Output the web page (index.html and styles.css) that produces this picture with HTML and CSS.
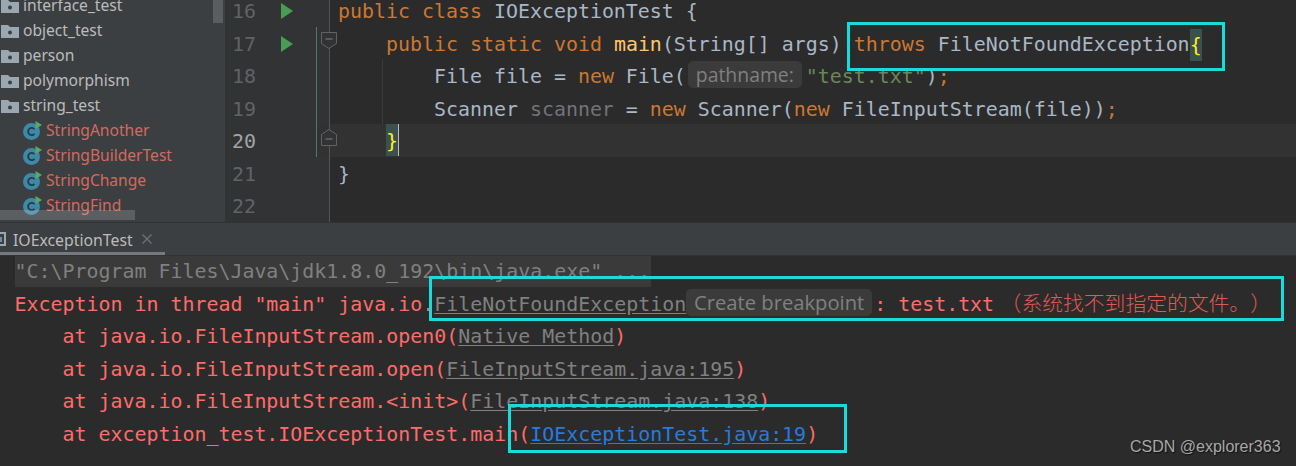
FILE: index.html
```html
<!DOCTYPE html>
<html lang="en">
<head>
<meta charset="utf-8">
<title>IOExceptionTest</title>
<link rel="stylesheet" href="styles.css">
</head>
<body>
<svg class="defs" width="0" height="0" aria-hidden="true">
  <symbol id="folder" viewBox="0 0 18 14"><path d="M0 1h7l2 2h9v11H0z" fill="#9aa7b0"/><circle cx="9" cy="8.5" r="2" fill="#3c3f41"/></symbol>
  <symbol id="cls" viewBox="0 0 19 19"><circle cx="8.5" cy="10.5" r="8.5" fill="#3d89a8"/><path d="M11.5 8.2a3.6 3.6 0 1 0 0 4.6" fill="none" stroke="#2b3a42" stroke-width="1.8"/><path d="M12.5 0l6.5 4-6.5 4z" fill="#59a869"/></symbol>
  <symbol id="run" viewBox="0 0 12 16"><path d="M0 0l12 8-12 8z" fill="#499c54"/></symbol>
</svg>
<main class="page">
  <section class="top">
    <nav class="tree">
      <div class="row"><svg class="ico-folder"><use href="#folder"/></svg>interface_test</div>
      <div class="row"><svg class="ico-folder"><use href="#folder"/></svg>object_test</div>
      <div class="row"><svg class="ico-folder"><use href="#folder"/></svg>person</div>
      <div class="row"><svg class="ico-folder"><use href="#folder"/></svg>polymorphism</div>
      <div class="row"><svg class="ico-folder"><use href="#folder"/></svg>string_test</div>
      <div class="row cls"><svg class="ico-cls"><use href="#cls"/></svg>StringAnother</div>
      <div class="row cls"><svg class="ico-cls"><use href="#cls"/></svg>StringBuilderTest</div>
      <div class="row cls"><svg class="ico-cls"><use href="#cls"/></svg>StringChange</div>
      <div class="row cls"><svg class="ico-cls"><use href="#cls"/></svg>StringFind</div>
      <div class="vscroll"></div>
      <div class="hscroll"></div>
    </nav>
    <div class="gutter">
      <div class="gl"><span class="num">16</span><svg class="run"><use href="#run"/></svg><span class="fold"></span></div>
      <div class="gl"><span class="num">17</span><svg class="run"><use href="#run"/></svg><span class="fold mod"><svg class="mark" viewBox="0 0 16 17"><path d="M.5.5h15v11l-7.500 5-7.500-5z" fill="#313335" stroke="#606366"/><path d="M4.500 7h7" stroke="#808080"/></svg></span></div>
      <div class="gl"><span class="num">18</span><span class="fold mod"></span></div>
      <div class="gl"><span class="num">19</span><span class="fold mod"></span></div>
      <div class="gl"><span class="num cur">20</span><span class="fold mod curbg"><svg class="mark" viewBox="0 0 16 17"><path d="M.5 16.500v-11l7.500-5 7.500 5v11z" fill="#313335" stroke="#606366"/><path d="M4.500 10h7" stroke="#808080"/></svg></span></div>
      <div class="gl"><span class="num">21</span><span class="fold"></span></div>
      <div class="gl"><span class="num">22</span><span class="fold"></span></div>
    </div>
    <div class="editor">
<pre class="ln"><b>public class</b> IOExceptionTest {</pre>
<pre class="ln">    <b>public static void</b> <i>main</i>(String[] args) <b>throws</b> FileNotFoundException<em>{</em></pre>
<pre class="ln guided">        File file = <b>new</b> File(<span class="hint">pathname:</span><u>"test.txt"</u>)<b>;</b></pre>
<pre class="ln guided">        Scanner <s>scanner</s> = <b>new</b> Scanner(<b>new</b> FileInputStream(file))<b>;</b></pre>
<pre class="ln curline">    <em class="caret">}</em></pre>
<pre class="ln">}</pre>
<pre class="ln"> </pre>
    </div>
  </section>
  <header class="tabs">
    <svg class="tabico" viewBox="0 0 6 14"><path d="M-6 1H5v12H-6" fill="none" stroke="#9aa7b0" stroke-width="2"/><path d="M-2 5H2v5H-2z" fill="#6f8fa0"/></svg>
    <span class="tabname">IOExceptionTest</span>
    <svg class="tabx" viewBox="0 0 10 10"><path d="M.5.5l9 9M9.500.5l-9 9" stroke="#6e7173" stroke-width="1.300"/></svg>
  </header>
  <section class="console">
<pre class="cl"><span class="cmd">"C:\Program Files\Java\jdk1.8.0_192\bin\java.exe" ...</span></pre>
<pre class="cl">Exception in thread "main" java.io.<a>FileNotFoundException</a><span class="hint bp">Create breakpoint</span>: test.txt <span class="zh">（系统找不到指定的文件。）</span></pre>
<pre class="cl">    at java.io.FileInputStream.open0(<a>Native Method</a>)</pre>
<pre class="cl">    at java.io.FileInputStream.open(<a>FileInputStream.java:195</a>)</pre>
<pre class="cl">    at java.io.FileInputStream.&lt;init&gt;(<a>FileInputStream.java:138</a>)</pre>
<pre class="cl">    at exception_test.IOExceptionTest.main(<a class="blue">IOExceptionTest.java:19</a>)</pre>
  </section>
  <div class="box box-a"></div>
  <div class="box box-b"></div>
  <div class="box box-c"></div>
  <div class="mark-csdn">CSDN @explorer363</div>
</main>
</body>
</html>
```
FILE: styles.css
```css
* { box-sizing: border-box; }
html, body { margin: 0; height: 466px; overflow: hidden; background: #2b2b2b; }
.defs { position: absolute; }
.page { position: relative; width: 1296px; height: 466px; display: flex; flex-direction: column; overflow: hidden; }

.top { height: 222px; display: flex; overflow: hidden; flex: none; }

.tree { position: relative; width: 225px; flex: none; background: #3c3f41; color: #bbbbbb; font: 15.6px/25px "Noto Sans", sans-serif; overflow: hidden; }
.row { height: 25px; display: flex; align-items: center; gap: 4px; padding-left: 1px; position: relative; top: -7px; white-space: nowrap; }
.row.cls { padding-left: 23px; color: #d5695d; }
.ico-folder { width: 18px; height: 14px; flex: none; }
.ico-cls { width: 19px; height: 19px; flex: none; }
.vscroll { position: absolute; left: 213px; top: 0; width: 10px; height: 23px; background: #5b5d5f; }
.hscroll { position: absolute; left: 0; top: 210px; width: 135px; height: 10px; background: rgba(255,255,255,.17); }

.gutter { width: 105px; flex: none; background: #313335; border-right: 1px solid #555555; margin-top: -6px; font: 19.93px/36.5px "DejaVu Sans Mono", monospace; color: #606366; }
.gl { height: 32.5px; display: flex; align-items: stretch; padding-left: 7px; }
.num { width: 24px; flex: none; }
.num.cur { color: #a4a3a3; }
.run { width: 12px; height: 16px; margin: 9px 0 0 25px; flex: none; }
.fold { width: 13px; margin-left: auto; flex: none; position: relative; }
.fold.mod { border-left: 1px solid #4d7a6c; }
.curbg { background: #323232; }
.mark { position: absolute; left: 4px; top: 5px; width: 16px; height: 17px; z-index: 2; overflow: visible; }

.editor { flex: 1; margin-top: -6px; background: #2b2b2b; min-width: 0; }
.ln, .cl { margin: 0; height: 32.5px; font: 19.93px/36.5px "DejaVu Sans Mono", monospace; white-space: pre; color: #a9b7c6; }
.ln { padding-left: 8px; }
.ln b { font-weight: normal; color: #cc7832; }
.ln i { font-style: normal; color: #ffc66d; }
.ln u { text-decoration: none; color: #6a8759; }
.ln s { text-decoration: none; color: #72737a; }
.ln em { font-style: normal; color: #ffef28; background: #3b514d; display: inline-block; height: 32px; line-height: 34px; vertical-align: top; margin-top: 2px; }
.ln em.caret { box-shadow: 1px 0 0 #bbbbbb; margin-top: 0; line-height: 36.5px; }
.guided { background: linear-gradient(#3b3b3b, #3b3b3b) 52px 0 / 1px 100% no-repeat; }
.curline { background: #323232; }
.hint { display: inline-block; background: #3b3b3b; color: #808080; font: 19.4px/27px "Open Sans", sans-serif; border-radius: 5px; text-align: center; height: 27px; vertical-align: 1px; width: 114px; margin: 0 4px 0 2px; }
.hint.bp { width: 186px; margin: 0 2px 0 0; font-size: 20.2px; }

.tabs { height: 34px; flex: none; background: #3c3f41; border-top: 1px solid #323232; border-bottom: 1px solid #323232; display: flex; align-items: center; color: #bbbbbb; font: 15.8px/32px "Noto Sans", sans-serif; position: relative; }
.tabs::after { content: ""; position: absolute; left: 0; bottom: 0; width: 165px; height: 3px; background: #747a80; }
.tabico { width: 6px; height: 14px; flex: none; }
.tabname { margin-left: 7px; position: relative; top: 1px; }
.tabx { width: 10px; height: 10px; margin-left: 9px; flex: none; }

.console { flex: 1; background: #2b2b2b; padding-left: 14.5px; }
.cl { color: #ff6b68; line-height: 32.5px; }
.cmd { display: inline-block; color: #808080; background: #3a3a3a; width: 636px; height: 31px; line-height: 31px; }
.cl a { color: #808080; text-decoration: underline; text-underline-offset: 2px; }
.cl a.blue { color: #287bde; }
.zh { font: 300 20.8px/20px "Noto Sans CJK SC", sans-serif; color: #e0584f; margin-left: -5.5px; text-spacing-trim: space-all; font-feature-settings: "palt" 0; }

.box { position: absolute; border: 3px solid #17dcdc; }
.box-a { left: 847px; top: 22px; width: 378px; height: 49px; }
.box-b { left: 429px; top: 276px; width: 855px; height: 45px; }
.box-c { left: 508px; top: 404px; width: 339px; height: 49px; }
.mark-csdn { position: absolute; left: 1130px; top: 438px; font: 16px/18px "Liberation Sans", sans-serif; color: #a8a8a8; text-shadow: 1px 1px 1px #111; white-space: nowrap; }
```
